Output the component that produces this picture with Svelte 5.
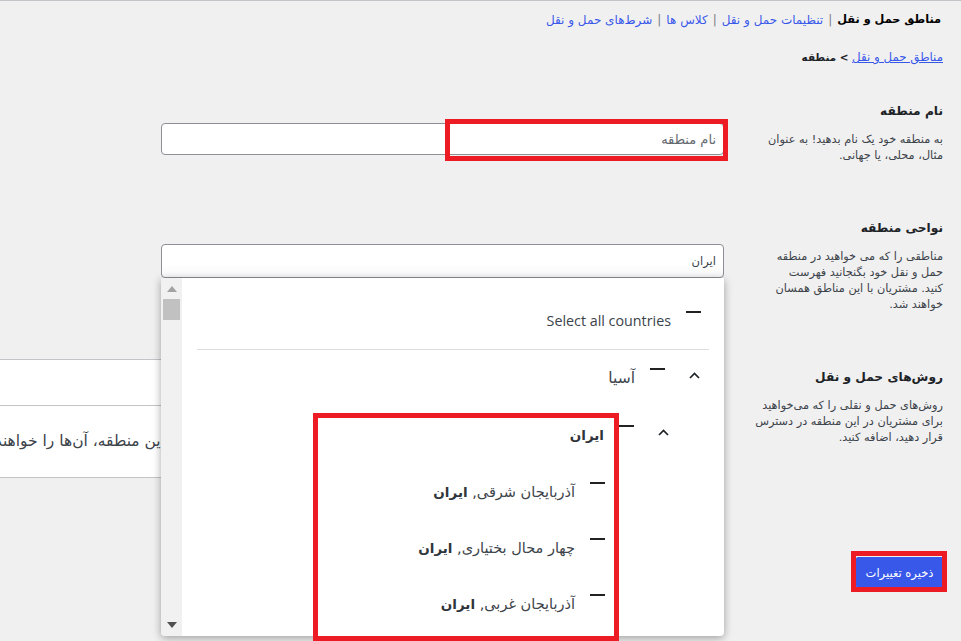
<script>
  const tabs = ['تنظیمات حمل و نقل', 'کلاس ها', 'شرط‌های حمل و نقل'];
  const cities = ['آذربایجان شرقی', 'چهار محال بختیاری', 'آذربایجان غربی'];
</script>

<div class="page" dir="rtl">
  <nav class="tabs">
    <b>مناطق حمل و نقل</b>
    {#each tabs as tab}
      <span class="sep">|</span>
      <a href="#tab">{tab}</a>
    {/each}
  </nav>

  <h2 class="crumb"><a href="#zones">مناطق حمل و نقل</a> &gt; منطقه</h2>

  <section class="row name-row">
    <div class="label">
      <h3>نام منطقه</h3>
      <p>به منطقه خود یک نام بدهید! به عنوان<br />مثال، محلی، یا جهانی.</p>
    </div>
    <div class="field">
      <input class="text" type="text" placeholder="نام منطقه" />
    </div>
  </section>

  <section class="row area-row">
    <div class="label">
      <h3>نواحی منطقه</h3>
      <p>مناطقی را که می خواهید در منطقه<br />حمل و نقل خود بگنجانید فهرست<br />کنید. مشتریان با این مناطق همسان<br />خواهند شد.</p>
    </div>
    <div class="field">
      <div class="select">ایران</div>
      <div class="dropdown">
        <div class="options">
          <div class="opt all">
            <span class="dash"></span>
            <span class="opt-text">Select all countries</span>
          </div>
          <div class="opt">
            <svg class="caret" viewBox="0 0 21 12" aria-hidden="true"><path d="M6 8 10.5 3.5 15 8" /></svg>
            <span class="dash"></span>
            <span class="opt-text">آسیا</span>
          </div>
          <div class="nested">
            <div class="opt">
              <svg class="caret" viewBox="0 0 21 12" aria-hidden="true"><path d="M6 8 10.5 3.5 15 8" /></svg>
              <span class="dash"></span>
              <span class="opt-text"><b>ایران</b></span>
            </div>
            <div class="nested leaves">
              {#each cities as city}
                <div class="opt leaf">
                  <span class="caret"></span>
                  <span class="dash"></span>
                  <span class="opt-text">{city}, <b>ایران</b></span>
                </div>
              {/each}
            </div>
          </div>
        </div>
        <div class="scrollbar">
          <span class="arrow up"></span>
          <span class="thumb"></span>
          <span class="arrow down"></span>
        </div>
      </div>
    </div>
  </section>

  <section class="row method-row">
    <div class="label">
      <h3>روش‌های حمل و نقل</h3>
      <p>روش‌های حمل و نقلی را که می‌خواهید<br />برای مشتریان در این منطقه در دسترس<br />قرار دهید، اضافه کنید.</p>
    </div>
    <div class="field">
      <div class="table">
        <div class="thead"></div>
        <div class="tbody">این منطقه، آن‌ها را خواهند دید.</div>
      </div>
    </div>
  </section>

  <div class="actions">
    <button type="button" class="save">ذخیره تغییرات</button>
  </div>

  <span class="mark mark-name"></span>
  <span class="mark mark-tree"></span>
  <span class="mark mark-save"></span>
</div>

<style>
  :global(body) {
    margin: 0;
    background: #f0f0f1;
    overflow: hidden;
  }
  .page {
    position: relative;
    height: 641px;
    box-sizing: border-box;
    padding: 0 18px 0 0;
    border-top: 1px solid #c3c4c7;
    font-family: "DejaVu Sans", sans-serif;
    font-size: 11px;
    color: #3c434a;
    overflow: hidden;
  }
  a {
    color: #3858e9;
  }
  .tabs {
    height: 18px;
    margin: 10px 2px 0 0;
    display: flex;
    align-items: center;
    gap: 5px;
    line-height: 18px;
    font-size: 12px;
    color: #787c82;
  }
  .tabs b {
    color: #000;
    font-size: 11.3px;
  }
  .tabs a {
    text-decoration: none;
  }
  .crumb {
    margin: 19px 0 0;
    height: 18px;
    font-size: 10.4px;
    line-height: 18px;
    color: #1d2327;
  }
  .crumb a {
    font-size: 11.8px;
    font-weight: 400;
  }
  .row {
    display: flex;
    gap: 6px;
  }
  .name-row {
    height: 117px;
    margin-top: 37px;
  }
  .area-row {
    height: 149px;
  }
  .method-row {
    height: 188px;
  }
  .label {
    width: 213px;
    flex: none;
  }
  .label h3 {
    margin: 0;
    font-size: 12.2px;
    line-height: 16px;
    color: #1d2327;
  }
  .label p {
    margin: 13px 0 0;
    font-size: 11.3px;
    line-height: 16px;
    white-space: nowrap;
  }
  .field {
    position: relative;
    width: 563px;
    flex: none;
  }
  .name-row .field {
    padding-top: 20px;
  }
  .area-row .field {
    padding-top: 24px;
  }
  .method-row .field {
    margin-top: -10px;
  }
  .text,
  .select {
    display: block;
    box-sizing: border-box;
    width: 100%;
    border: 1px solid #8c8f94;
    border-radius: 4px;
    background: #fff;
    font: inherit;
    color: #3c434a;
  }
  .text {
    height: 32px;
    padding: 0 7px;
    font-size: 13px;
  }
  .text::placeholder {
    color: #646970;
    opacity: 1;
  }
  .select {
    height: 34px;
    padding: 0 7px;
    line-height: 32px;
    font-size: 11.5px;
    background: linear-gradient(#fff 60%, #f8f8f8);
  }
  .dropdown {
    position: absolute;
    top: 58px;
    right: 0;
    left: 0;
    height: 358px;
    display: flex;
    background: #fff;
    border-radius: 0 0 4px 4px;
    box-shadow: 0 2px 8px rgba(0, 0, 0, 0.35);
    overflow: hidden;
    z-index: 2;
  }
  .options {
    flex: 1;
    padding: 0 19px 0 0;
    overflow: hidden;
  }
  .opt {
    display: flex;
    height: 57px;
    box-sizing: border-box;
    gap: 15px;
    font-size: 15.5px;
  }
  .opt.leaf {
    height: 56px;
    font-size: 14.5px;
  }
  .opt.all {
    height: 72px;
    margin: 0 -4px 18px 15px;
    padding: 33px 8px 0 0;
    border-bottom: 1px solid #ddd;
    font-family: "Open Sans", sans-serif;
    font-size: 14.3px;
  }
  .dash {
    width: 15px;
    height: 2px;
    flex: none;
    background: #222;
  }
  .opt-text {
    line-height: 20px;
    white-space: nowrap;
  }
  .opt b {
    color: #2f353b;
    font-size: 13.5px;
  }
  .caret {
    width: 21px;
    height: 12px;
    flex: none;
    margin: 2px 0 0 4px;
  }
  .caret path {
    fill: none;
    stroke: #1d2327;
    stroke-width: 1.7;
  }
  .nested {
    padding-right: 31px;
  }
  .nested.leaves {
    padding-right: 29px;
  }
  .scrollbar {
    width: 21px;
    flex: none;
    display: flex;
    flex-direction: column;
    align-items: center;
    background: #f1f1f1;
  }
  .arrow {
    width: 0;
    height: 0;
    border-left: 5px solid transparent;
    border-right: 5px solid transparent;
  }
  .arrow.up {
    margin-top: 8px;
    border-bottom: 6px solid #a3a3a3;
  }
  .arrow.down {
    margin-top: auto;
    margin-bottom: 8px;
    border-top: 6px solid #505050;
  }
  .thumb {
    width: 17px;
    height: 21px;
    margin-top: 7px;
    background: #c1c1c1;
  }
  .table {
    width: 1000px;
    background: #fff;
    border-top: 1px solid #c3c4c7;
    border-bottom: 1px solid #c3c4c7;
  }
  .thead {
    height: 45px;
    border-bottom: 1px solid #c3c4c7;
  }
  .tbody {
    height: 71px;
    line-height: 71px;
    padding-right: 559px;
    font-size: 15.5px;
    white-space: nowrap;
  }
  .actions {
    display: flex;
    justify-content: flex-start;
  }
  .save {
    width: 87px;
    height: 31px;
    padding: 0;
    border: 0;
    border-radius: 2px;
    background: #3858e9;
    color: #fff;
    font: inherit;
    font-size: 11.5px;
    cursor: pointer;
  }
  .mark {
    position: absolute;
    box-sizing: border-box;
    border: 5px solid #ed1c24;
    pointer-events: none;
    z-index: 3;
  }
  .mark-name {
    left: 445px;
    top: 118px;
    width: 283px;
    height: 42px;
  }
  .mark-tree {
    left: 313px;
    top: 412px;
    width: 306px;
    height: 228px;
  }
  .mark-save {
    left: 851px;
    top: 550px;
    width: 96px;
    height: 41px;
  }
</style>
